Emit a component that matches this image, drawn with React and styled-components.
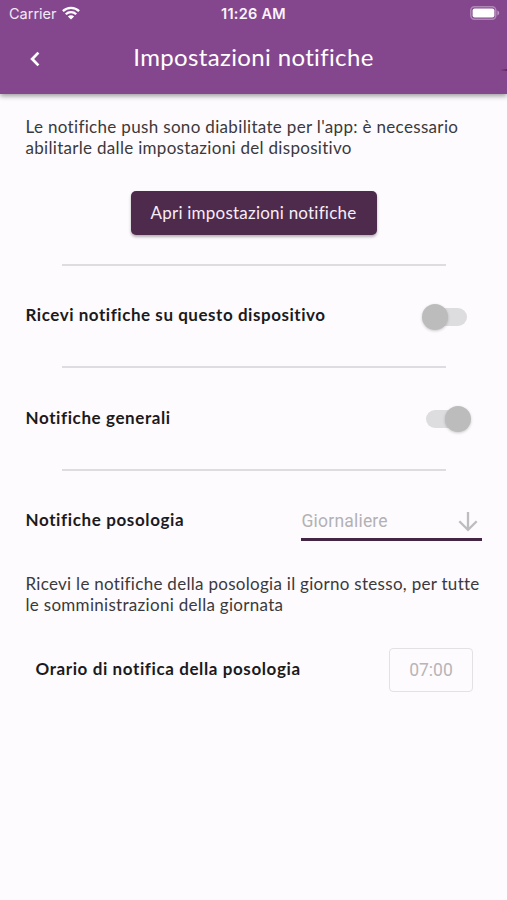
import React from 'react';
import styled, { createGlobalStyle } from 'styled-components';

const App = () => {
    return (
        <Screen>
            <GlobalStyle />
            <Header>
                <StatusBar>
                    <Carrier>
                        <span>Carrier</span>
                        <WifiIcon />
                    </Carrier>
                    <Clock>11:26 AM</Clock>
                    <BatteryIcon />
                </StatusBar>
                <NavBar>
                    <BackButton aria-label="Indietro">
                        <svg width="11" height="16" viewBox="0 0 11 16">
                            <path d="M9.4 1.6 3.2 8l6.2 6.4" fill="none" stroke="#fff" strokeWidth="2.8" />
                        </svg>
                    </BackButton>
                    <Title>Impostazioni notifiche</Title>
                    <EdgeMark />
                </NavBar>
            </Header>
            <Content>
                <Paragraph>
                    <Line $spacing="0.33px">Le notifiche push sono diabilitate per l'app: è necessario</Line>
                    <Line $spacing="0.3px">abilitarle dalle impostazioni del dispositivo</Line>
                </Paragraph>
                <OpenButton>Apri impostazioni notifiche</OpenButton>
                <Divider />
                <Row>
                    <Label $spacing="0.54px">Ricevi notifiche su questo dispositivo</Label>
                    <Switch />
                </Row>
                <Divider />
                <Row $height="101px">
                    <Label $spacing="0.6px">Notifiche generali</Label>
                    <Switch $on />
                </Row>
                <Divider />
                <Row>
                    <Label $spacing="0.62px">Notifiche posologia</Label>
                    <Select>
                        <span>Giornaliere</span>
                        <svg width="20" height="21" viewBox="0 0 20 21">
                            <path d="M10 1v17.5M1.3 10.2l8.7 8.6 8.7-8.6" fill="none" stroke="#bdbcbe" strokeWidth="2.3" />
                        </svg>
                    </Select>
                </Row>
                <Description>
                    <Line $spacing="0.29px">Ricevi le notifiche della posologia il giorno stesso, per tutte</Line>
                    <Line $spacing="0.3px">le somministrazioni della giornata</Line>
                </Description>
                <TimeRow>
                    <Label $spacing="0.6px">Orario di notifica della posologia</Label>
                    <TimeField>07:00</TimeField>
                </TimeRow>
            </Content>
        </Screen>
    )
}
export default App;

const WifiIcon = () => (
    <svg width="18" height="14" viewBox="0 0 18 14">
        <g fill="none" stroke="#fff" strokeWidth="2.3">
            <path d="M.9 5.1a11.6 11.6 0 0 1 16.2 0" />
            <path d="M3.8 8.3a7.4 7.4 0 0 1 10.4 0" />
        </g>
        <path d="M9 13.6 5.9 10.5a4.4 4.4 0 0 1 6.2 0z" fill="#fff" />
    </svg>
)

const BatteryIcon = () => (
    <svg width="30" height="14" viewBox="0 0 30 14">
        <rect x=".8" y=".8" width="25" height="12.4" rx="3.6" fill="none" stroke="#fff" strokeOpacity=".35" strokeWidth="1.5" />
        <rect x="2.6" y="2.6" width="21.8" height="8.8" rx="2" fill="#fff" />
        <path d="M27.4 4.6c2.4.8 2.4 4 0 4.8z" fill="#fff" fillOpacity=".45" />
    </svg>
)

const Switch = ({ $on }) => (
    <Track $on={$on}>
        <Thumb />
    </Track>
)

const GlobalStyle = createGlobalStyle`
  body {
    margin: 0;
    background: #fdfbfe;
  }

  * {
    box-sizing: border-box;
  }
`

const Screen = styled.div`
  height: 900px;
  overflow: hidden;
  background: #fdfbfe;
  color: #3b393c;
  font-family: Lato, "Liberation Sans", sans-serif;
`

const Header = styled.header`
  height: 94px;
  background: #84478e;
  color: #fff;
  box-shadow: 0 2px 5px rgba(0, 0, 0, 0.4);
`

const StatusBar = styled.div`
  display: grid;
  grid-template-columns: 1fr auto 1fr;
  align-items: center;
  height: 27px;
  padding: 0 7px 0 9px;
  font-family: Inter, "Liberation Sans", sans-serif;
  font-size: 14.5px;

  > svg {
    justify-self: end;
    margin-top: -1px;
  }
`

const Carrier = styled.div`
  display: flex;
  align-items: center;
  gap: 6px;
  color: #f3e9f4;

  svg {
    margin: -2px 0 0 -1px;
  }
`

const Clock = styled.span`
  margin-right: 2px;
  color: #fbf4fb;
  font-weight: 600;
  letter-spacing: 0.25px;
`

const NavBar = styled.div`
  display: grid;
  grid-template-columns: 70px 1fr 70px;
  align-items: center;
  height: 64px;
`

const BackButton = styled.button`
  display: flex;
  padding: 0 0 0 29px;
  border: 0;
  background: none;
`

const Title = styled.h1`
  margin: 0 0 4px;
  font-size: 24px;
  font-weight: 400;
  line-height: 30px;
  letter-spacing: 0.35px;
  text-align: center;
  white-space: nowrap;
`

const EdgeMark = styled.i`
  align-self: end;
  justify-self: end;
  width: 7px;
  height: 2px;
  margin-bottom: 20px;
  background: linear-gradient(90deg, #84478e, #6d2460);
`

const Content = styled.main`
  display: flex;
  flex-direction: column;
  padding: 23px 25px 0;
`

const Paragraph = styled.p`
  margin: 0;
  font-size: 17px;
  line-height: 20.5px;
`

const Description = styled(Paragraph)`
  margin-top: 3px;
`

const Line = styled.span`
  display: block;
  padding-left: 0.5px;
  letter-spacing: ${({ $spacing }) => $spacing};
  white-space: nowrap;
`

const OpenButton = styled.button`
  align-self: center;
  width: 246px;
  height: 44px;
  margin: 33px 0 29px;
  padding: 0 0 1px;
  border: 0;
  border-radius: 5px;
  background: #4e2a4c;
  box-shadow: 0 2px 3px rgba(0, 0, 0, 0.3);
  color: #f7edf8;
  font-family: inherit;
  font-size: 17px;
  letter-spacing: 0.22px;
  white-space: nowrap;
`

const Divider = styled.hr`
  width: 384px;
  height: 2px;
  margin: 0 auto;
  border: 0;
  background: #dedce0;
`

const Row = styled.div`
  display: flex;
  align-items: center;
  justify-content: space-between;
  height: ${({ $height }) => $height || '100px'};
`

const Label = styled.span`
  margin-top: -3px;
  padding-left: 0.5px;
  color: #1c1a1d;
  font-size: 17px;
  font-weight: 700;
  letter-spacing: ${({ $spacing }) => $spacing};
  white-space: nowrap;
`

const Track = styled.span`
  display: flex;
  align-items: center;
  justify-content: ${({ $on }) => ($on ? 'flex-end' : 'flex-start')};
  width: 41px;
  height: 18px;
  margin: 1px 15px 0 0;
  border-radius: 9px;
  background: #dddcde;
`

const Thumb = styled.span`
  flex: none;
  width: 26px;
  height: 26px;
  margin: 0 -4px;
  border-radius: 50%;
  background: #bcbcbc;
  box-shadow: 0 1px 3px rgba(0, 0, 0, 0.2);
`

const Select = styled.div`
  display: flex;
  align-items: center;
  justify-content: space-between;
  width: 181px;
  height: 40px;
  padding: 3px 4px 0 0.5px;
  border-bottom: 3px solid #452545;
  color: #b3b1b4;
  font-family: Roboto, sans-serif;
  font-size: 17.5px;
  letter-spacing: 0.2px;
`

const TimeRow = styled.div`
  display: flex;
  align-items: center;
  justify-content: space-between;
  margin-top: 33px;
  padding: 0 9px 0 10px;
`

const TimeField = styled.div`
  display: flex;
  align-items: center;
  justify-content: center;
  width: 84px;
  height: 44px;
  padding-bottom: 1px;
  border: 1.5px solid #e3e1e5;
  border-radius: 4px;
  color: #b7b5b8;
  font-family: Roboto, sans-serif;
  font-size: 17.5px;
`
